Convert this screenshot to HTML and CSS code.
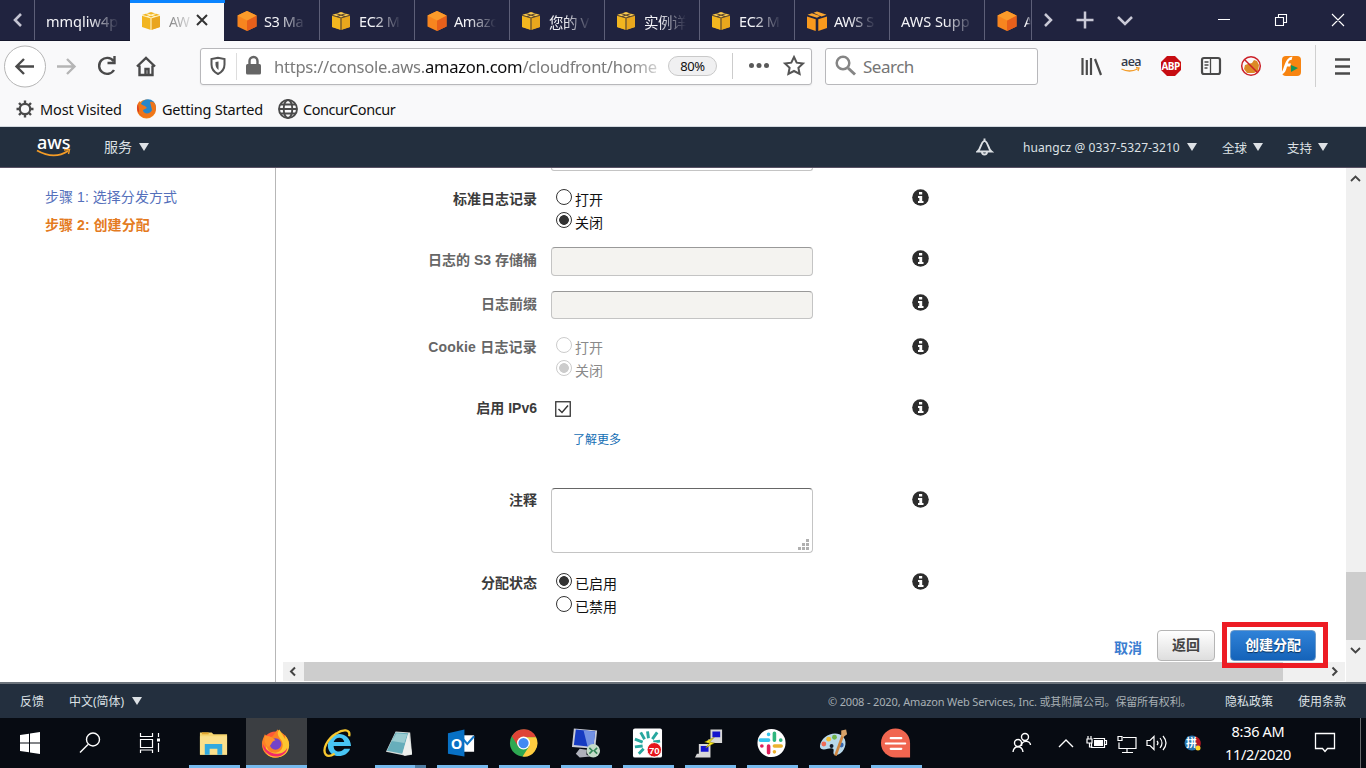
FILE: index.html
```html
<!DOCTYPE html>
<html lang="zh-CN">
<head>
<meta charset="utf-8">
<title>AWS CloudFront</title>
<link rel="stylesheet" href="styles.css">
</head>
<body>
<svg class="defs" width="0" height="0">
  <symbol id="cube-yellow" viewBox="0 0 20 20">
    <path d="M1 4 10 1l9 3v12l-9 3-9-3z" fill="#d9a228"/>
    <path d="M1 4.500 9.500 7v11.800L1 16z" fill="#f2b61f"/><path d="M10.500 7 19 4.500V16l-8.500 2.800z" fill="#e9a71d"/>
    <path d="M1.500 4 10 1.200 18.500 4 10 6.500z" fill="#f8cb52"/>
    <path d="M1 4.300 10 7l9-2.700M10 7v12M5 2.600 14 5.500M15 2.600 6 5.500" fill="none" stroke="#5a4630" stroke-width="1.100"/>
  </symbol>
  <symbol id="cube-active" viewBox="0 0 20 20">
    <path d="M1 4 10 1l9 3v12l-9 3-9-3z" fill="#f2b522"/><path d="M10 7 19 4.500V16l-9 3z" fill="#e9a51e"/>
    <path d="M1 4.300 10 7l9-2.700M10 7v12M5 2.600 14 5.500M15 2.600 6 5.500" fill="none" stroke="#fff3c7" stroke-width="1.100"/>
  </symbol>
  <symbol id="cube-orange" viewBox="0 0 22 22">
    <path d="M11 1 20.500 5.500v11L11 21l-9.500-4.500v-11z" fill="#f7851f"/>
    <path d="M11 10.500 20.500 5.500v11L11 21z" fill="#e75f1b"/><path d="M11 1 20.500 5.500 11 10.500 1.500 5.500z" fill="#fb9b2a"/>
  </symbol>
  <symbol id="cube-split" viewBox="0 0 22 22">
    <path d="M1 6.500l8.700 2.800V21L1 18zM21 6.500l-8.700 2.800V21l8.700-3z" fill="#f8991d"/>
    <path d="M1.500 4.800 6 3.300 14 6 11 7.800zM7.500 2.800 11 1.500l9.500 3.300-5 1.700z" fill="#f8a530"/>
  </symbol>
  <symbol id="info" viewBox="0 0 17 17">
    <circle cx="8.500" cy="8.500" r="8.300" fill="#2d2d2d"/>
    <path d="M7 3h3.200v2.500H7zM6 7h4.200v5h1.300v2H6v-2h1.300V9H6z" fill="#fff"/>
  </symbol>
</svg>

<div class="tabbar">
  <div class="scroll-btn"><svg width="34" height="40"><path d="M21 14l-6 6 6 6" class="st" stroke="#c4c4d2" stroke-width="2.600"/></svg></div>
  <div class="tab plain first"><span class="lbl">mmqliw4p</span></div>
  <div class="tab active"><svg class="fav"><use href="#cube-active"/></svg><span class="lbl">AW</span><svg width="14" height="14"><path d="M2 2l10 10M12 2 2 12" stroke="#333" stroke-width="2" fill="none"/></svg></div>
  <div class="tab"><svg class="fav big"><use href="#cube-orange"/></svg><span class="lbl">S3 Ma</span></div>
  <div class="tab"><svg class="fav"><use href="#cube-yellow"/></svg><span class="lbl">EC2 M</span></div>
  <div class="tab"><svg class="fav big"><use href="#cube-orange"/></svg><span class="lbl">Amazo</span></div>
  <div class="tab"><svg class="fav"><use href="#cube-yellow"/></svg><span class="lbl">您的 V</span></div>
  <div class="tab"><svg class="fav"><use href="#cube-yellow"/></svg><span class="lbl">实例详</span></div>
  <div class="tab"><svg class="fav"><use href="#cube-yellow"/></svg><span class="lbl">EC2 M</span></div>
  <div class="tab"><svg class="fav big"><use href="#cube-split"/></svg><span class="lbl">AWS S</span></div>
  <div class="tab plain"><span class="lbl">AWS Supp</span></div>
  <div class="tab cut"><svg class="fav big"><use href="#cube-orange"/></svg><span class="lbl">A</span></div>
  <svg class="tab-tools" width="334" height="40"><g class="st" stroke="#c9c9d6" stroke-width="2.500"><path d="M13 14l6 6-6 6M44.500 20h17M53 11.500v17M86 17l7 7 7-7"/></g><g class="st" stroke="#fff" stroke-width="1.100"><path d="M186 19.500h12M243.500 17.500h8v8h-8zM246.500 17.500v-3h8v8h-3M300 14l12 12M312 14l-12 12"/></g></svg>
</div>

<div class="navbar">
  <svg class="nav-left" width="200" height="51"><circle cx="25" cy="25.500" r="20.500" fill="#fff" stroke="#b5b5b5"/><g class="st" stroke="#4a4a4a" stroke-width="2.400"><path d="M34 25.500H17M24 18l-7.500 7.500L24 33"/><path d="M57 25.500h17M67 18l7.500 7.500L67 33" stroke="#b5b5b5"/><path d="M113.500 20a8 8 0 1 0 .5 9M114.500 15v7h-7"/><path d="M137 25.500l9-8.500 9 8.500M139.500 24.500V34h13v-9.500"/><path d="M145.500 34v-6h3v6"/></g></svg>
  <div class="urlbar">
    <svg width="73" height="35"><path d="M17 8.800 10.500 10v5.500c0 4.500 2.500 7.500 6.500 9.500 4-2 6.500-5 6.500-9.500V10z" class="st" stroke="#555" stroke-width="2"/><path d="M17.500 12.500v8.500c-2-1.500-3-3.500-3-5.500v-2.500z" fill="#555"/><path d="M35.500 4v27" stroke="#ddd"/><rect x="45" y="15" width="15" height="10.500" rx="1.500" fill="#666"/><path d="M48.500 16v-4a4 4 0 0 1 8 0v4" class="st" stroke="#666" stroke-width="2.400"/></svg>
    <span class="url">https://console.aws.<b>amazon.com</b>/cloudfront/home</span>
    <span class="zoom">80%</span>
    <svg class="url-tools" width="90" height="35"><path d="M11.500 4v26" stroke="#ccc"/><g fill="#5a5a5a"><circle cx="30.500" cy="16.500" r="2.500"/><circle cx="38" cy="16.500" r="2.500"/><circle cx="45.500" cy="16.500" r="2.500"/></g><path d="M73 8l2.700 5.700 6.300.8-4.600 4.300 1.200 6.200-5.600-3-5.600 3 1.200-6.200-4.600-4.300 6.300-.8z" class="st" stroke="#555" stroke-width="2"/></svg>
  </div>
  <div class="search"><svg width="37" height="35"><circle cx="17" cy="14" r="6.300" class="st" stroke="#858585" stroke-width="2.500"/><path d="M22 19l7 6.500" stroke="#858585" stroke-width="3"/></svg>Search</div>
  <svg class="nav-right" width="328" height="51">
    <g stroke="#4a4a4a" stroke-width="2.200"><path d="M44.500 17v17M48.800 19v15M53 17v17M57 18l6 16"/></g>
    <text x="83" y="25" class="i-aea">aea</text><path d="M83.500 28q8 4 16 0M98 26.500l3 .5-1 3" class="st" stroke="#f39b26" stroke-width="1.300"/>
    <path d="M129 15h8l6 6v8l-6 6h-8l-6-6v-8z" fill="#c70d12"/><text x="123.500" y="29" class="i-abp">ABP</text>
    <rect x="164" y="17" width="18" height="16" rx="2" class="st" stroke="#4a4a4a" stroke-width="2.200"/><path d="M172.500 17v16M166.500 21h4M166.500 24h4M166.500 27h3" stroke="#4a4a4a" stroke-width="1.300"/>
    <path d="M207 24l3-1 4-1 2-3 3 1 2 4-1 6-4 2h-7l-3-4z" fill="#dc8a27"/><circle cx="213" cy="25" r="9.300" class="st" stroke="#cc2028" stroke-width="1.500"/><path d="M206.500 18.500l13 13" stroke="#cc2028" stroke-width="1.500"/>
    <rect x="244" y="15" width="19" height="20" rx="4" fill="#f78411"/><path d="M242.500 32c4-1 3-15 12-16.500l-1 3.500c-3 0-3 2-3.500 3.500h3l-1 3h-3c-1 4-2 7-6 8z" fill="#fff"/><path d="M253 24l7 3-7 4z" fill="#14945a"/>
    <path d="M277.500 4v42" stroke="#d0d0d0"/><path d="M297 18.500h15M297 25.500h15M297 32.500h15" stroke="#4a4a4a" stroke-width="2.300"/>
  </svg>
</div>

<div class="bookmarks">
  <svg width="40" height="34"><circle cx="25" cy="17" r="5.200" class="st" stroke="#4a4a4a" stroke-width="2.200"/><g stroke="#4a4a4a" stroke-width="2.400"><path d="M25 8.500v3.500M25 22v3.500M16.500 17h3.500M30 17h3.500M19 11l2.300 2.300M28.700 20.700 31 23M31 11l-2.300 2.300M21.300 20.700 19 23"/></g></svg><span class="bm-1">Most Visited</span>
  <svg width="40" height="34"><circle cx="24.500" cy="17" r="9.500" fill="#f28419"/><circle cx="26" cy="15" r="7.800" fill="#2687ca"/><path d="M28 10c4-1 6 2 6 6 0 8-10 13-16 7-5-5-3-12 0-14 0 3 2 4 5 5l2 2-4 2c0 4 7 5 9 0z" fill="#ef7519"/><path d="M16 12c-2 5 0 10 5 12-3-1-5-3-4-5z" fill="#dc3425"/></svg><span class="bm-2">Getting Started</span>
  <svg width="40" height="34"><g class="st" stroke="#4a4a4a" stroke-width="1.900"><circle cx="25" cy="17" r="9"/><ellipse cx="25" cy="17" rx="4.300" ry="9"/><path d="M17.500 12.500h15M16 17h18M17.500 21.500h15"/></g></svg><span class="bm-3">ConcurConcur</span>
</div>

<div class="aws-head">
  <svg width="104" height="40"><text x="37" y="22" class="i-aws">aws</text><path d="M37 23.500q17 9.500 31 .5" class="st" stroke="#f39b26" stroke-width="1.800"/><path d="M64 23l5.500-.5-1 4.500" class="st" stroke="#f39b26" stroke-width="1.400"/></svg>
  <span class="svc">服务</span><i class="tri"></i>
  <div class="acct">
    <svg width="18" height="20"><path d="M1.500 14.500c4-3 2.500-8.500 7-11 4.500 2.500 3 8 7 11zM8.500 4V1.500M6 15a2.500 2.500 0 0 0 5 0" class="st" stroke="#dce0e4" stroke-width="1.900"/></svg>
    <span class="user">huangcz @ 0337-5327-3210</span><i class="tri"></i>
    <span class="region">全球</span><i class="tri"></i>
    <span class="help">支持</span><i class="tri"></i>
  </div>
</div>

<div class="body">
  <div class="steps"><a>步骤 1: 选择分发方式</a><a class="now">步骤 2: 创建分配</a></div>
  <div class="main">
    <div class="form">
      <div class="row r0"><span></span><div class="field"></div></div>
      <div class="row r1"><label>标准日志记录</label><div class="radios"><span><i class="radio"></i>打开</span><span><i class="radio on"></i>关闭</span></div><svg class="inf"><use href="#info"/></svg></div>
      <div class="row r2 off"><label>日志的 S3 存储桶</label><div class="field"></div><svg class="inf"><use href="#info"/></svg></div>
      <div class="row r3 off"><label>日志前缀</label><div class="field"></div><svg class="inf"><use href="#info"/></svg></div>
      <div class="row r4 off"><label class="cookie">Cookie 日志记录</label><div class="radios"><span><i class="radio"></i>打开</span><span><i class="radio on"></i>关闭</span></div><svg class="inf"><use href="#info"/></svg></div>
      <div class="row r5"><label>启用 IPv6</label><div class="check"><svg width="17" height="17"><rect x=".75" y=".75" width="14.500" height="14.500" fill="#fff" stroke="#333" stroke-width="1.300"/><path d="M3.500 8l3.500 3.500 6-7" class="st" stroke="#333" stroke-width="1.400"/></svg><a>了解更多</a></div><svg class="inf"><use href="#info"/></svg></div>
      <div class="row r6"><label>注释</label><div class="area"><svg width="12" height="12" fill="#b0b0b0"><path d="M9 0h3v3H9zM9 4h3v3H9zM5 4h3v3H5zM9 8h3v3H9zM5 8h3v3H5zM1 8h3v3H1z"/></svg></div><svg class="inf"><use href="#info"/></svg></div>
      <div class="row r7"><label>分配状态</label><div class="radios"><span><i class="radio on"></i>已启用</span><span><i class="radio"></i>已禁用</span></div><svg class="inf"><use href="#info"/></svg></div>
      <div class="actions"><a>取消</a><span class="btn">返回</span><span class="btn primary">创建分配<i class="mark"></i></span></div>
    </div>
    <div class="hbar"><svg width="21" height="19"><path d="M12 5.500 8 9.500l4 4" class="st" stroke="#444" stroke-width="2"/></svg><div class="hthumb"></div><svg width="62" height="19"><path d="M49.500 5.500l4 4-4 4" class="st" stroke="#444" stroke-width="2"/></svg></div>
  </div>
  <div class="vbar"><svg width="20" height="20"><path d="M5 13l4.500-4.500L14 13" class="st" stroke="#444" stroke-width="1.800"/></svg><div class="vthumb"></div><svg width="20" height="20"><path d="M5 8l4.500 4.500L14 8" class="st" stroke="#444" stroke-width="1.800"/></svg></div>
</div>

<div class="footer">
  <span class="fb">反馈</span><span class="lang">中文(简体)</span><i class="tri"></i>
  <span class="copy">© 2008 - 2020, Amazon Web Services, Inc. 或其附属公司。保留所有权利。</span>
  <span class="priv">隐私政策</span><span>使用条款</span>
</div>

<div class="taskbar">
  <svg class="sys" width="184" height="50"><path d="M20 17l9-1.300V24.500h-9zM30 15.500l10-1.500v10.500H30zM20 25.500h9v8.800L20 33zM30 25.500h10V36l-10-1.500z" fill="#fff"/><g class="st" stroke="#fff" stroke-width="1.400"><circle cx="93" cy="21.500" r="6.500"/><path d="M88 26.500l-8 8"/></g><g class="st" stroke="#fff" stroke-width="1.200"><path d="M140.500 15v3.500h12V15M140.500 21.500h12v8h-12zM140.500 35v-3h12v3M158.500 15v4M158.500 25v9"/></g><path d="M157 20.500h3v3h-3z" fill="#fff"/></svg>
  <div class="app"><svg class="ico" viewBox="0 0 32 32"><path d="M2 4h12l2 2h14v21H2z" fill="#f6d66f"/><path d="M2 8h28v19H2z" fill="#fbe08b"/><path d="M7 27V16h18v11h-5v-6h-8v6z" fill="#31a9df"/><path d="M4 5h7" stroke="#e2a62e" stroke-width="2"/></svg></div>
  <div class="app current"><svg class="ico" viewBox="0 0 32 32"><circle cx="16" cy="16.500" r="13.500" fill="#ff5a36"/><path d="M16 30C8 30 2 24 2 16c0-4 2-7 3-10l4 4 4-2 5-7c7 5 12 9 12 15 0 8-6 14-14 14z" fill="#fb8125"/><path d="M20 1c-4 5 0 8 2 11 4 7-1 13-6 13-6 0-9-4-9-7-4 8 3 12 9 12 13 0 17-12 12-20l-2-3v4z" fill="#fec52f"/><path d="M2.500 15c1 8 6 14 13.500 14s12-5 12-9c-3 5-7 6-11 6-7 0-12-5-14.500-11z" fill="#f32968"/><circle cx="16" cy="16" r="6" fill="#7443c8"/><path d="M5 8c4-1 8 1 11 4-5 1-3 5-8 7-3-3-4-7-3-11z" fill="#ff922a"/></svg></div>
  <div class="app noline"><svg class="ico" viewBox="0 0 32 32"><path d="M30 18H12c0 7 8 7 11 3h6c-3 10-22 11-23-3C6 2 29 1 30 18zm-7-4c-1-6-9-6-11 0z" fill="#48c5f4"/><path d="M28 8c2-8-7-7-13-3C5 11 0 22 4 27c2 2 6 1 9-1" class="st" stroke="#f8c82f" stroke-width="2.400"/></svg></div>
  <div class="app split"><svg class="ico" viewBox="0 0 32 32"><path d="M12 3l15 1 2 23-7 1-20-4z" fill="#d6dcda"/><path d="M12 4l13 1-6 21L3 23z" fill="#67aebb"/><path d="M13 5l11 1-3 9-13-2z" fill="#9acbd0"/><path d="M25 5l4 21-8 2-2-2z" fill="#eef0ed"/></svg></div>
  <div class="app"><svg class="ico" viewBox="0 0 32 32"><path d="M14 7h15v17H14z" fill="#fff"/><path d="M15 8l7 8 7-8M15 24V9" class="st" stroke="#1378c9" stroke-width="2"/><path d="M2 5l17-4v28L2 26z" fill="#0871c5"/><text x="5" y="21" class="i-o">O</text></svg></div>
  <div class="app"><svg class="ico" viewBox="0 0 32 32"><circle cx="16" cy="15" r="14" fill="#2ea852"/><path d="M16 15h-2L4 8A14 14 0 0 1 29 9H16z" fill="#df4437"/><path d="M16 9h13A14 14 0 0 1 15 29l7-11z" fill="#ffcd40"/><path d="M4 8l7 11 5-10z" fill="#df4437"/><circle cx="16" cy="15" r="6.700" fill="#fff"/><circle cx="16" cy="15" r="5.300" fill="#438af2"/></svg></div>
  <div class="app"><svg class="ico" viewBox="0 0 32 32"><path d="M4 0l24 2-2 19-24-2z" fill="#c8cbd5"/><path d="M6 1l20 2-2 16L4 17z" fill="#163bc1"/><path d="M14 2l12 1-2 16-6-1z" fill="#7291e2"/><path d="M10 21l7 1v5l4 2-11 1-4-4z" fill="#aeb1ba"/><circle cx="24" cy="23" r="7" fill="#c5dcc8"/><path d="M20 20l3 3-3 3M28 20l-3 3 3 3" class="st" stroke="#358858" stroke-width="1.700"/></svg></div>
  <div class="app"><svg class="ico" viewBox="0 0 32 32"><rect x="1" y="0" width="30" height="30" rx="2" fill="#fff"/><g stroke="#27a79f" stroke-width="3"><path d="M16 3l1 7M26 4l-5 7M9 4l4 7M3 11l8 3M3 19l8-1M7 26l5-5M29 13l-7 1"/></g><circle cx="23" cy="22" r="7.500" fill="#e6151c" stroke="#fff"/><text x="17.500" y="26" class="i-70">70</text></svg></div>
  <div class="app"><svg class="ico" viewBox="0 0 32 32"><g fill="#d7d7d7"><path d="M17 1h12v10H17zM15 11h14v4H13zM5 16h12v10H5zM3 26h14v4H1z"/></g><path d="M19 3h8v6h-8zM7 18h8v6H7z" fill="#1415ce"/><path d="M21 9l-10 5 5 1-4 5 9-5-5-1z" fill="#ffed18" stroke="#7c7200" stroke-width=".5"/></svg></div>
  <div class="app"><svg class="ico" viewBox="0 0 32 32"><circle cx="16" cy="15" r="14.500" fill="#fff"/><g fill="none" stroke-width="3.700" stroke-linecap="round"><path d="M13 6v.1M4.500 12h8.500" stroke="#36c5f0"/><path d="M19 5v7M25.500 12h.1" stroke="#2eb67d"/><path d="M19 18h7M19 24v.1" stroke="#ecb22e"/><path d="M13 18v7M6 18h.1" stroke="#e01e5a"/></g></svg></div>
  <div class="app"><svg class="ico" viewBox="0 0 32 32"><path d="M2 18C3 9 14 3 22 6c8 3 8 12 3 18-5 5-10 4-9 0s-2-4-6-3-8 1-8-3z" fill="#b9d9eb"/><circle cx="6" cy="16" r="2.500" fill="#ef6a55"/><circle cx="11" cy="11" r="2.500" fill="#f2bd32"/><circle cx="17" cy="9" r="2.500" fill="#70b54a"/><circle cx="14" cy="18" r="2" fill="#111827"/><circle cx="24" cy="17" r="2.500" fill="#3668b1"/><path d="M26 6 18 28" stroke="#cf8742" stroke-width="2.800"/><path d="M24 2l5-1 1 5-4 3-2-2z" fill="#d9a368"/></svg></div>
  <div class="app"><svg class="ico" viewBox="0 0 32 32"><path d="M16 0a15 15 0 0 1 15 15v15H16a15 15 0 0 1 0-30z" fill="#f16650"/><path d="M11 10h11M6 15.500h20M11 21h11" stroke="#fff" stroke-width="2.200" stroke-linecap="round"/></svg></div>
  <svg class="tray" width="210" height="50"><g class="st" stroke="#fff" stroke-width="1.400"><circle cx="26" cy="19" r="3.500"/><path d="M22.500 28c0-6 9-6 9-1"/><circle cx="19" cy="25" r="3.500"/><path d="M14 34c1-7 9-7 10 0M60 29l7-7 7 7"/></g><g class="st" stroke="#fff" stroke-width="1.200"><path d="M94.500 20.500h11v9h-13v-4M105.500 22.500h2v4h-2M89 18v3M92 18v3M88 21h5v4h-5zM90.500 25v4h3"/><path d="M124 19.500h13v11h-17v-6M128 30.500v4M123 34.500h11M119 18.500h4v4h-4z"/><path d="M148 22.500h3l4-4v13l-4-4h-3zM158 23q2 2 0 4M161 20q4 5 0 10M164 18q6 7 0 14"/></g><path d="M95 22h9v6h-9z" fill="#fff"/><circle cx="193" cy="25" r="7.500" fill="#2775ad"/><path d="M196 18q9 4 4 13l-3-5z" fill="#b51625"/><text x="187" y="29" class="i-ime">拼</text><circle cx="199" cy="30" r="2.500" fill="#ffd42a"/></svg>
  <div class="clock"><span>8:36 AM</span><span class="date">11/2/2020</span></div>
  <svg class="note" width="66" height="50"><path d="M15.500 15.500h19v15h-7l-2.500 3-2.500-3h-7z" class="st" stroke="#fff" stroke-width="1.300"/><path d="M60.500 0v50" stroke="#66686b"/></svg>
</div>
</body>
</html>
```
FILE: styles.css
```css
* { box-sizing: border-box; }
body { margin: 0; width: 1366px; height: 768px; overflow: hidden; display: flex; flex-direction: column; background: #fff; font-family: "Noto Sans", "Noto Sans CJK SC", sans-serif; color: #111; }
svg { display: block; flex: none; }
.defs { position: absolute; }
.st { fill: none; }
span, a, label { white-space: nowrap; }

.tabbar { height: 41px; flex: none; display: flex; background: #20233f; border-bottom: 1px solid #15172c; color: #f4f4f8; font-size: 14.5px; }
.scroll-btn { width: 35px; border-right: 1px solid #5d5f78; }
.tab { width: 95px; height: 40px; padding-left: 11px; flex: none; display: flex; align-items: center; border-right: 1px solid #5d5f78; overflow: hidden; }
.tab.first { border-right: 0; }
.tab.active { width: 95px; height: 41px; background: linear-gradient(#f9f9fa, #f9f9fa) 0 0 / 94px 100% no-repeat; color: #333; border-right: 0; padding-bottom: 1px; box-shadow: inset 0 3px #0a84ff; }
.fav { width: 20px; height: 20px; margin-right: 8px; margin-top: 2px; }
.fav.big { width: 22px; height: 22px; margin-right: 6px; }
.lbl { width: 43px; overflow: hidden; padding-top: 2px; letter-spacing: -.4px; -webkit-mask-image: linear-gradient(90deg, #000 35%, transparent 98%); mask-image: linear-gradient(90deg, #000 35%, transparent 98%); }
.plain .lbl { width: 73px; letter-spacing: 0; -webkit-mask-image: linear-gradient(90deg, #000 60%, transparent 100%); mask-image: linear-gradient(90deg, #000 60%, transparent 100%); }
.active .lbl { width: 22px; margin-right: 4px; font-size: 14px; letter-spacing: -.6px; -webkit-mask-image: linear-gradient(90deg, #0009, #0002); mask-image: linear-gradient(90deg, #0009, #0002); }
.tab.cut { width: 47px; }
.cut .lbl { width: 7px; }

.navbar { height: 51px; flex: none; display: flex; align-items: center; background: #f9f9fa; }
.urlbar { width: 612px; height: 37px; border: 1px solid #b8b8bb; border-radius: 3px; background: #fff; display: flex; align-items: center; box-shadow: 0 1px 2px #0001; }
.url { width: 386px; overflow: hidden; color: #7b7b7b; font-size: 16.6px; letter-spacing: -.27px; -webkit-mask-image: linear-gradient(90deg, #000 92%, #0004); mask-image: linear-gradient(90deg, #000 92%, #0004); }
.url b { font-weight: 400; color: #0c0c0d; }
.zoom { width: 49px; height: 20px; margin: -2px 0 0 8px; border: 1px solid #c9c9c9; border-radius: 10px; background: #f0f0f1; font-size: 13px; line-height: 18px; text-align: center; letter-spacing: -.4px; }
.url-tools { margin-left: 4px; }
.search { width: 213px; height: 37px; margin: 0 0 0 13px; border: 1px solid #b8b8bb; border-radius: 3px; background: #fff; display: flex; align-items: center; color: #757575; font-size: 17px; letter-spacing: -.5px; }
.i-aea { font: 600 12.500px "Open Sans", sans-serif; fill: #33394a; letter-spacing: -.6px; }
.i-abp { font: bold 10px "Open Sans", sans-serif; fill: #fff; letter-spacing: -.6px; }

.bookmarks { height: 35px; flex: none; display: flex; align-items: center; background: #f9f9fa; border-bottom: 1px solid #d3d9df; font-size: 14.5px; }
.bm-1 { width: 82px; letter-spacing: -.12px; }
.bm-2 { width: 101px; letter-spacing: -.22px; }
.bm-3 { letter-spacing: -.45px; }

.aws-head { height: 41px; flex: none; display: flex; align-items: center; background: #232f3e; border-bottom: 1px solid #595264; color: #dde1e5; font-size: 14px; }
.i-aws { font: 500 18px "Noto Sans", sans-serif; fill: #fff; }
.svc { margin-top: -2px; }
.tri { flex: none; width: 0; height: 0; border: 5px solid transparent; border-top: 8px solid #dde1e5; border-bottom: 0; }
.svc + .tri { margin-left: 7px; border-left-width: 5.500px; border-right-width: 5.500px; }
.acct { margin-left: auto; width: 390px; display: flex; align-items: center; font-size: 12.5px; }
.acct .user { width: 157px; margin: 0 7px 0 29px; font-size: 12px; letter-spacing: .08px; }
.acct .region { margin: 0 6px 0 25px; }
.acct .help { margin: 0 6px 0 24px; }

.body { height: 514px; flex: none; display: flex; }
.steps { width: 276px; border-right: 1px solid #b7b7b7; padding: 18px 0 0 45px; display: flex; flex-direction: column; font: 14px/22px "Liberation Sans", "Noto Sans CJK SC", sans-serif; color: #5570bb; gap: 6px; }
.steps a { letter-spacing: .05px; }
.steps .now { color: #e47b1f; font-weight: 700; }
.main { width: 1070px; display: flex; flex-direction: column; }
.form { height: 494px; }
.row { display: grid; grid-template-columns: 261px 262px 17px; align-items: start; font: 14px/20px "Liberation Sans", "Noto Sans CJK SC", sans-serif; }
.row > :nth-child(2) { margin-left: 14px; width: 262px; }
.row label { text-align: right; font-weight: 700; color: #3b3b3b; padding-top: 2px; }
.row .cookie { letter-spacing: .2px; }
.row .inf { width: 17px; height: 17px; margin: 2px 0 0 112.500px; }
.off label { color: #666; }
.off { color: #8a8a8a; }
.r0 { height: 19px; } .r1 { height: 60px; } .r2, .r3 { height: 44px; } .r4 { height: 61px; } .r5 { height: 92px; } .r6 { height: 83px; } .r7 { height: 56px; }
.r2 .inf, .r3 .inf, .r4 .inf, .r5 .inf, .r6 .inf { margin-top: 3px; }
.r2 label, .r3 label { padding-top: 3px; }
.field { height: 29px; border: 1px solid #c4c4c4; border-top-color: #999; border-radius: 4px; background: #f4f3f0; }
.r3 .field { height: 28px; }
.r0 .field { height: 3px; border-top: 0; border-radius: 0 0 4px 4px; background: #fff; }
.radios { display: flex; flex-direction: column; padding-left: 5px; gap: 3px; }
.radios span { height: 20px; display: flex; align-items: center; padding-top: 5px; }
.radio { width: 16px; height: 16px; margin: -6px 3px 0 0; border: 1px solid #333; border-radius: 50%; background: #fff; }
.radio.on { background: radial-gradient(circle, #333 4.500px, #fff 5.200px); }
.off .radio { border-color: #ccc; }
.off .radio.on { background: radial-gradient(circle, #ccc 4.500px, #fff 5.200px); }
.check { padding: 5px 0 0 4px; }
.check a { display: block; color: #146eb4; font-size: 12px; margin: 12px 0 0 18px; }
.area { height: 65px; border: 1px solid #c4c4c4; border-top-color: #666; border-radius: 4px; display: flex; align-items: flex-end; justify-content: flex-end; padding: 0 3px 1px 0; }
.actions { display: flex; padding: 3px 30px 0 0; justify-content: flex-end; font: 700 14px/27px "Noto Sans CJK SC", sans-serif; color: #3b7dd1; }
.actions a { margin: 4px 15px 0 0; }
.btn { width: 58px; height: 31px; border: 1px solid #b5b5b5; border-radius: 4px; background: linear-gradient(#fff, #dedede); color: #444; text-align: center; margin-right: 15px; }
.btn.primary { position: relative; width: 86px; margin: 0; border-color: #6c9bcb; background: linear-gradient(#2f82d8, #1563b9); color: #fff; text-shadow: 0 1px 1px #0008; }
.mark { position: absolute; left: -9px; top: -9px; width: 106px; height: 46px; border: 5px solid #ed1c24; }
.hbar { display: flex; height: 19px; width: 1062px; margin-left: 7px; background: #f0f0f0; }
.hthumb { width: 979px; background: #cdcdcd; }
.vbar { width: 20px; background: #f0f0f0; display: flex; flex-direction: column; }
.vthumb { height: 68px; margin-top: 384px; background: #cdcdcd; }

.footer { height: 36px; flex: none; display: flex; align-items: center; background: #232f3e; border-top: 2px solid #6c737b; color: #dce1e5; padding: 0 20px 0; font-size: 12px; }
.lang { margin: 0 8px 0 25px; }
.copy { width: 365px; margin-left: auto; color: #a8b0b5; font-size: 11px; letter-spacing: -.15px; }
.priv { margin: 0 25px 0 32px; }

.taskbar { height: 50px; flex: none; display: flex; background: #070b12; color: #fff; }
.app { width: 62px; height: 50px; padding: 10px 6px 0 5px; display: flex; flex-direction: column; align-items: center; justify-content: space-between; flex: none; }
.app::after { content: ""; width: 51px; height: 3px; background: #76b9ed; }
.ico { width: 31px; height: 32px; margin-right: 2px; }
.current { background: linear-gradient(#3b3e42, #3b3e42) 0 0 / 61px 50px no-repeat; padding-left: 0; padding-right: 1px; }
.current::after { width: 61px; }
.noline::after { visibility: hidden; }
.split::after { background: linear-gradient(90deg, #76b9ed 40px, #4f7da3 40px); }
.i-o { font: bold 15px "Open Sans", sans-serif; fill: #fff; }
.i-70 { font: bold 10px "Liberation Sans", sans-serif; fill: #fff; }
.i-ime { font: bold 11px "Noto Sans CJK SC", sans-serif; fill: #fff; }
.tray { margin-left: 71px; }
.clock { width: 91px; flex: none; display: flex; flex-direction: column; align-items: center; padding: 2px 0 0 7px; font-size: 14.5px; line-height: 23px; letter-spacing: -.3px; }
```
